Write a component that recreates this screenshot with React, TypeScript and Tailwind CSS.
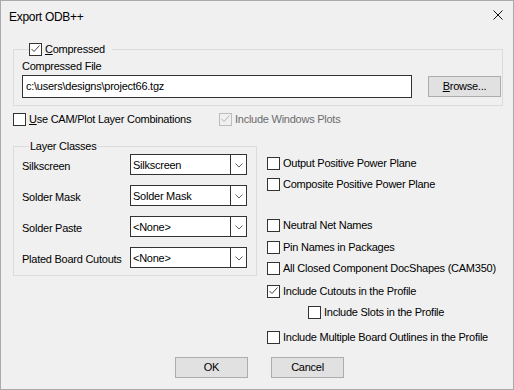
import React from "react";

function CheckBox({ checked = false, disabled = false }: { checked?: boolean; disabled?: boolean }) {
  return (
    <span
      className={`relative inline-block w-[13px] h-[13px] shrink-0 border ${
        disabled ? "border-[#bcbcbc] bg-[#f0f0f0]" : "border-[#333333] bg-white"
      }`}
    >
      {checked && (
        <svg className="absolute -left-px -top-px" width="13" height="13" viewBox="0 0 13 13">
          <polyline
            points="2.5,6 5,8.5 10.5,2.5"
            fill="none"
            stroke={disabled ? "#b5b5b5" : "#444444"}
            strokeWidth="1"
          />
        </svg>
      )}
    </span>
  );
}

function CheckRow({
  label,
  checked,
  disabled,
  className = "",
}: {
  label: React.ReactNode;
  checked?: boolean;
  disabled?: boolean;
  className?: string;
}) {
  return (
    <div className={`flex items-center gap-[3px] h-[13px] ${className}`}>
      <CheckBox checked={checked} disabled={disabled} />
      <span className={`whitespace-nowrap ${disabled ? "text-[#6d6d6d]" : ""}`}>{label}</span>
    </div>
  );
}

function Combo({ value }: { value: string }) {
  return (
    <div className="flex w-[117px] h-[21px] border border-[#333333] bg-white">
      <div className="flex-1 flex items-center pl-[2px] pt-[1px] whitespace-nowrap">{value}</div>
      <div className="w-[16px] border-l border-[#333333] flex items-center justify-center pt-[2px]">
        <svg width="8" height="5" viewBox="0 0 8 5">
          <polyline points="0.5,0.5 4,4 7.5,0.5" fill="none" stroke="#606060" strokeWidth="1" />
        </svg>
      </div>
    </div>
  );
}

const layerRows = [
  { label: "Silkscreen", value: "Silkscreen" },
  { label: "Solder Mask", value: "Solder Mask" },
  { label: "Solder Paste", value: "<None>" },
  { label: "Plated Board Cutouts", value: "<None>" },
];

export default function App() {
  return (
    <div className="w-[514px] h-[390px] bg-[#f0f0f0] border border-[#aaaaaa] flex flex-col text-black text-[11px] leading-[13px] tracking-[-0.25px] font-['Liberation_Sans',Arial,sans-serif]">
      {/* Title bar */}
      <div className="h-[31px] shrink-0 flex items-center justify-between pl-[8px] pr-[10px]">
        <span className="text-[12px] leading-[14px] tracking-[-0.3px]">Export ODB++</span>
        <svg className="-mt-[3px]" width="10" height="10" viewBox="0 0 10 10">
          <path d="M0.5,0.5 L9.5,9.5 M9.5,0.5 L0.5,9.5" stroke="#111111" strokeWidth="1" />
        </svg>
      </div>

      <div className="flex flex-col pl-[12px] pr-[10px]">
        {/* Compressed group */}
        <fieldset className="mt-[11px] border border-[#dcdcdc] pl-[8px] pr-[1px] pt-[4px] pb-[7px]">
          <legend className="ml-[7px] pr-[7px]">
            <div className="flex items-center gap-[3px] h-[13px]">
              <CheckBox checked />
              <span>
                <span className="underline">C</span>ompressed
              </span>
            </div>
          </legend>
          <div>Compressed File</div>
          <div className="mt-[2px] flex items-center gap-[16px]">
            <div className="w-[390px] h-[23px] border border-[#333333] bg-white flex items-center pl-[3px]">
              {"c:\\users\\designs\\project66.tgz"}
            </div>
            <button className="w-[73px] h-[21px] border border-[#adadad] bg-[#e1e1e1] flex items-center justify-center">
              <span>
                <span className="underline">B</span>rowse...
              </span>
            </button>
          </div>
        </fieldset>

        {/* CAM row */}
        <div className="mt-[7px] flex items-center">
          <CheckRow
            className="w-[206px]"
            label={
              <>
                <span className="underline">U</span>se CAM/Plot Layer Combinations
              </>
            }
          />
          <CheckRow label="Include Windows Plots" checked disabled />
        </div>

        {/* Lower section */}
        <div className="mt-[14px] flex items-start gap-[10px]">
          <fieldset className="w-[244px] border border-[#dcdcdc] pl-[8px] pr-[9px] pt-[1px] pb-[7px]">
            <legend className="ml-[7px] px-[1px]">Layer Classes</legend>
            <div className="flex flex-col gap-[10px]">
              {layerRows.map((row) => (
                <div key={row.label} className="flex items-center">
                  <div className="w-[108px] pt-[3px] whitespace-nowrap">{row.label}</div>
                  <Combo value={row.value} />
                </div>
              ))}
            </div>
          </fieldset>

          <div className="flex flex-col pt-[17px]">
            <CheckRow label="Output Positive Power Plane" />
            <CheckRow className="mt-[8px]" label="Composite Positive Power Plane" />
            <CheckRow className="mt-[28px]" label="Neutral Net Names" />
            <CheckRow className="mt-[9px]" label="Pin Names in Packages" />
            <CheckRow className="mt-[8px]" label="All Closed Component DocShapes (CAM350)" />
            <CheckRow className="mt-[10px]" label="Include Cutouts in the Profile" checked />
            <CheckRow className="mt-[8px] ml-[41px]" label="Include Slots in the Profile" />
            <CheckRow className="mt-[12px]" label="Include Multiple Board Outlines in the Profile" />
          </div>
        </div>

        {/* Buttons */}
        <div className="mt-[13px] ml-[162px] flex gap-[23px]">
          <button className="w-[73px] h-[21px] border border-[#adadad] bg-[#e1e1e1] flex items-center justify-center">
            OK
          </button>
          <button className="w-[73px] h-[21px] border border-[#adadad] bg-[#e1e1e1] flex items-center justify-center">
            Cancel
          </button>
        </div>
      </div>
    </div>
  );
}
